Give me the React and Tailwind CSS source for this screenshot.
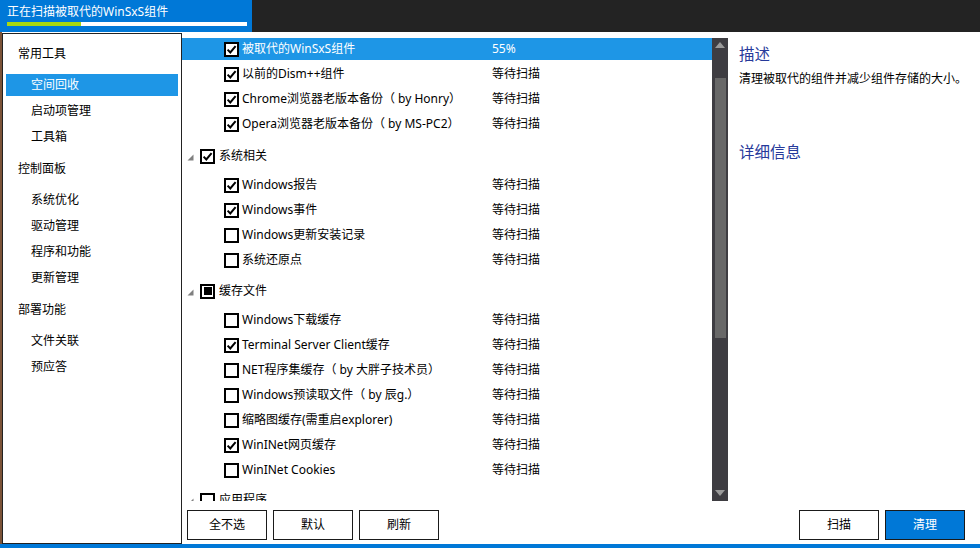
import React from "react";

const sideGroups = [
  { title: "常用工具", items: ["空间回收", "启动项管理", "工具箱"] },
  { title: "控制面板", items: ["系统优化", "驱动管理", "程序和功能", "更新管理"] },
  { title: "部署功能", items: ["文件关联", "预应答"] },
];

const topRows = [
  { name: "被取代的WinSxS组件", status: "55%", checked: true, active: true },
  { name: "以前的Dism++组件", checked: true },
  { name: "Chrome浏览器老版本备份（ by Honry）", checked: true },
  { name: "Opera浏览器老版本备份（ by MS-PC2）", checked: true },
];

const groups = [
  {
    title: "系统相关",
    state: "checked",
    top: "mt-[7px]",
    rows: [
      { name: "Windows报告", checked: true },
      { name: "Windows事件", checked: true },
      { name: "Windows更新安装记录" },
      { name: "系统还原点" },
    ],
  },
  {
    title: "缓存文件",
    state: "mixed",
    top: "mt-[6px]",
    rows: [
      { name: "Windows下载缓存" },
      { name: "Terminal Server Client缓存", checked: true },
      { name: "NET程序集缓存（ by 大胖子技术员）" },
      { name: "Windows预读取文件（ by 辰g.）" },
      { name: "缩略图缓存(需重启explorer)" },
      { name: "WinINet网页缓存", checked: true },
      { name: "WinINet Cookies" },
    ],
  },
  { title: "应用程序", state: "none", top: "mt-[5px]", rows: [] },
];

function CheckBox({ state }) {
  return (
    <span className="flex h-[15px] w-[15px] shrink-0 items-center justify-center border-2 border-black bg-white">
      {state === "checked" && (
        <svg width="11" height="11" viewBox="0 0 11 11">
          <path d="M1.6 5.6 L4.3 8.4 L9.6 2.2" fill="none" stroke="#000" strokeWidth="2" />
        </svg>
      )}
      {state === "mixed" && <span className="h-[8px] w-[8px] bg-black" />}
    </span>
  );
}

function Row({ row }) {
  return (
    <div
      className={`mb-[3px] flex h-[22px] shrink-0 items-center ${
        row.active ? "bg-[#1e96e6] text-white" : "text-black"
      }`}
    >
      <div className="flex w-[310px] items-center pl-[42px]">
        <CheckBox state={row.checked ? "checked" : "none"} />
        <span className="ml-[3px] whitespace-nowrap">{row.name}</span>
      </div>
      <span>{row.status || "等待扫描"}</span>
    </div>
  );
}

function GroupHead({ group }) {
  return (
    <div className={`${group.top} mb-[7px] flex h-[22px] shrink-0 items-center pl-[5px]`}>
      <svg width="7" height="7" viewBox="0 0 7 7" className="mt-[2px]">
        <polygon points="6.5,0.5 6.5,6.5 0.5,6.5" fill="#808080" />
      </svg>
      <span className="ml-[6px]">
        <CheckBox state={group.state} />
      </span>
      <span className="ml-[4px]">{group.title}</span>
    </div>
  );
}

export default function App() {
  return (
    <div className="flex h-[548px] w-[980px] flex-col overflow-hidden bg-white font-['Noto_Sans','Noto_Sans_CJK_SC',sans-serif] text-[12px] leading-[16px] text-black">
      {/* title bar */}
      <div className="flex h-[32px] shrink-0">
        <div className="w-[252px] bg-[#0078d7] px-[7px] pt-[4px]">
          <div className="text-white">正在扫描被取代的WinSxS组件</div>
          <div className="mt-[2px] flex h-[4px] w-[240px] bg-white">
            <div className="h-full w-[74px] bg-[#a8d810]" />
          </div>
        </div>
        <div className="flex-1 bg-[#232323]" />
      </div>

      <div className="flex min-h-0 flex-1">
        <div className="w-[2px] bg-[#7b5338]" />

        {/* sidebar */}
        <aside className="mt-[1px] w-[180px] border border-[#222] bg-white pt-[9px]">
          {sideGroups.map((g, gi) => (
            <div key={g.title} className={gi === 0 ? "" : "mt-[10px]"}>
              <div className="flex h-[22px] items-center pl-[15px]">{g.title}</div>
              <div className={`${gi === 0 ? "mt-[9px]" : "mt-[9px]"} flex flex-col gap-[4px]`}>
                {g.items.map((it) => (
                  <div
                    key={it}
                    className={`mx-[3px] flex h-[22px] items-center pl-[25px] ${
                      it === "空间回收" ? "bg-[#1e96e6] text-white" : ""
                    }`}
                  >
                    {it}
                  </div>
                ))}
              </div>
            </div>
          ))}
        </aside>

        {/* main */}
        <div className="flex min-w-0 flex-1 flex-col">
          <div className="flex h-[469px] pt-[6px]">
            <div className="flex h-[463px] w-[530px] flex-col overflow-hidden">
              {topRows.map((r) => (
                <Row key={r.name} row={r} />
              ))}
              {groups.map((g) => (
                <div key={g.title} className="flex shrink-0 flex-col">
                  <GroupHead group={g} />
                  {g.rows.map((r) => (
                    <Row key={r.name} row={r} />
                  ))}
                </div>
              ))}
            </div>

            {/* scrollbar */}
            <div className="flex h-[463px] w-[16px] flex-col items-center bg-[#3e3d42]">
              <svg width="10" height="6" viewBox="0 0 10 6" className="mt-[4px]">
                <polygon points="5,0 10,6 0,6" fill="#9a9a9a" />
              </svg>
              <div className="mt-[30px] h-[260px] w-[11px] bg-[#686868]" />
              <div className="flex-1" />
              <svg width="10" height="6" viewBox="0 0 10 6" className="mb-[5px]">
                <polygon points="0,0 10,0 5,6" fill="#9a9a9a" />
              </svg>
            </div>

            {/* description */}
            <div className="flex-1 pl-[11px] pt-[5px]">
              <div className="text-[15.5px] leading-[22px] text-[#26399a]">描述</div>
              <div className="mt-[5px] leading-[18px]">清理被取代的组件并减少组件存储的大小。</div>
              <div className="mt-[53px] text-[15.5px] leading-[22px] text-[#26399a]">详细信息</div>
            </div>
          </div>

          {/* buttons */}
          <div className="mt-[9px] flex px-[5px] pr-[15px]">
            <div className="flex gap-[6px]">
              {["全不选", "默认", "刷新"].map((b) => (
                <button
                  key={b}
                  className="flex h-[30px] w-[80px] items-center justify-center border border-[#1a1a1a] bg-white"
                >
                  {b}
                </button>
              ))}
            </div>
            <div className="flex-1" />
            <div className="flex gap-[6px]">
              <button className="flex h-[30px] w-[80px] items-center justify-center border border-[#1a1a1a] bg-white">
                扫描
              </button>
              <button className="flex h-[30px] w-[80px] items-center justify-center border border-[#1a1a1a] bg-[#0078d7] text-white">
                清理
              </button>
            </div>
          </div>
        </div>
      </div>

      <div className="h-[4px] shrink-0 bg-[#0078d7]" />
    </div>
  );
}
